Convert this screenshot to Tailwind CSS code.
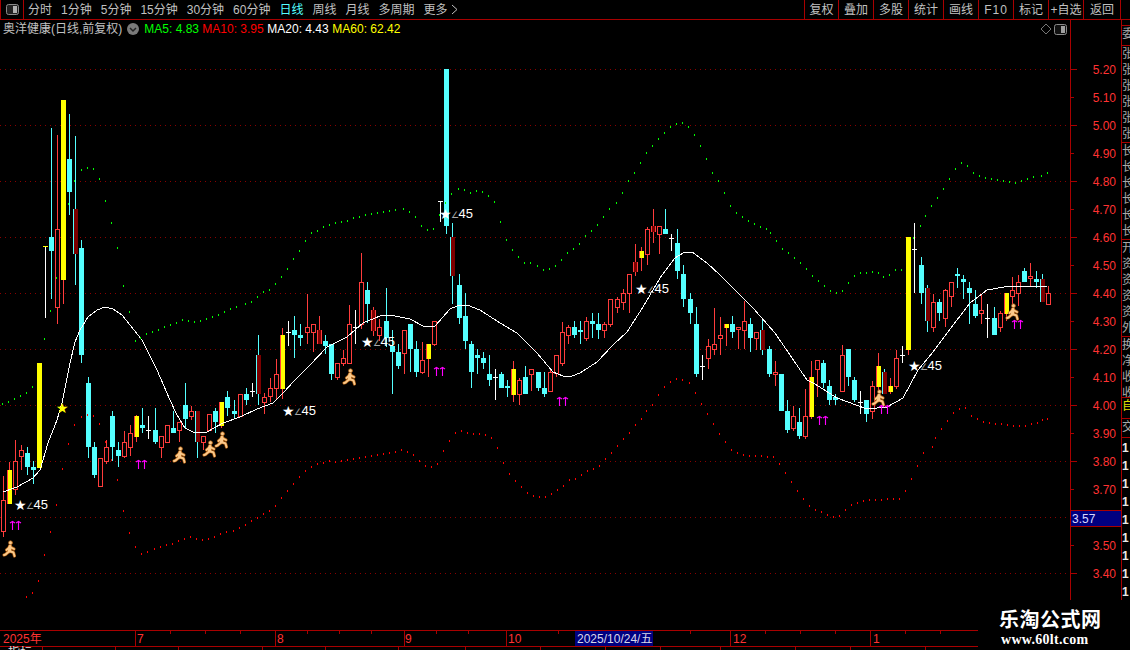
<!DOCTYPE html>
<html lang="zh-CN">
<head>
  <meta charset="UTF-8" />
  <title>奥洋健康 日线</title>
  <script src="https://cdn.jsdelivr.net/npm/@tailwindcss/browser@4"></script>
</head>
<body class="bg-black">
<div class="relative w-[1130px] h-[650px] overflow-hidden bg-black text-[12px] leading-none text-[#c0c0c0] font-['Liberation_Sans','Noto_Sans_CJK_SC',sans-serif]">

  <!-- toolbar -->
  <div class="flex items-center h-[20px] border-b border-[#a80000]">
    <div class="flex items-center justify-center w-[24px] h-full border-x border-[#a80000]">
      <svg width="13" height="11" viewBox="0 0 13 11"><rect x="0.5" y="0.5" width="12" height="10" rx="2" fill="#222" stroke="#8a8a8a"/><rect x="7" y="2" width="4" height="7" fill="#b0b0b0"/></svg>
    </div>
    <div class="flex items-center gap-[9px] pl-[4px]">
      <span>分时</span><span>1分钟</span><span>5分钟</span><span>15分钟</span><span>30分钟</span><span>60分钟</span>
      <span class="text-[#54ffff]">日线</span><span>周线</span><span>月线</span><span>多周期</span>
      <span class="flex items-center gap-[3px]">更多
        <svg width="7" height="11" viewBox="0 0 7 11" fill="none" stroke="#c0c0c0"><path d="M1 1l5 4.5-5 4.5"/></svg>
      </span>
    </div>
    <div class="flex ml-auto h-full mr-[9px] border-r border-[#a80000]">
      <span class="flex items-center justify-center w-[34px] border-l border-[#a80000]">复权</span>
      <span class="flex items-center justify-center w-[35px] border-l border-[#a80000]">叠加</span>
      <span class="flex items-center justify-center w-[35px] border-l border-[#a80000]">多股</span>
      <span class="flex items-center justify-center w-[35px] border-l border-[#a80000]">统计</span>
      <span class="flex items-center justify-center w-[35px] border-l border-[#a80000]">画线</span>
      <span class="flex items-center justify-center w-[35px] border-l border-[#a80000] tracking-[1px]">F10</span>
      <span class="flex items-center justify-center w-[35px] border-l border-[#a80000]">标记</span>
      <span class="flex items-center justify-center w-[35px] border-l border-[#a80000]">+自选</span>
      <span class="flex items-center justify-center w-[37px] border-l border-[#a80000]">返回</span>
    </div>
  </div>

  <!-- chart + price axis + side panel -->
  <div class="flex h-[580px]">
    <div class="flex flex-col w-[1070px]">
      <div class="flex items-center h-[18px] pl-[3px] pr-[3px]">
        <span>奥洋健康(日线,前复权)</span>
        <svg class="ml-[5px]" width="12" height="12" viewBox="0 0 12 12"><circle cx="6" cy="6" r="6" fill="#7a7a7a"/><path d="M3 5l3 3 3-3" fill="none" stroke="#222" stroke-width="1.5"/></svg>
        <span class="ml-[5px] w-[58px] text-[#00ff00]">MA5: 4.83</span>
        <span class="w-[65px] text-[#ff0000]">MA10: 3.95</span>
        <span class="w-[65px] text-white">MA20: 4.43</span>
        <span class="text-[#ffff00]">MA60: 62.42</span>
        <svg class="ml-auto" width="12" height="12" viewBox="0 0 12 12"><path d="M6 1l5 5-5 5-5-5z" fill="none" stroke="#777"/></svg>
        <svg class="ml-[2px]" width="13" height="11" viewBox="0 0 13 11"><rect x="0.5" y="0.5" width="12" height="10" rx="2" fill="#111" stroke="#8a8a8a"/><rect x="7" y="2" width="4" height="7" fill="#a0a0a0"/></svg>
      </div>
      <svg id="chart" class="block" width="1070" height="562" viewBox="0 38 1070 562" shape-rendering="crispEdges"></svg>
    </div>

    <div class="relative w-[51px] border-l border-[#a80000]">
      <svg id="axis" class="block" width="50" height="580" viewBox="1071 20 50 580"></svg>
      <div class="absolute left-0 top-[490px] flex items-center w-[50px] h-[17px] pl-[1px] bg-[#000080] border-y border-[#a80000] text-[#d8d8ff]">3.57</div>
    </div>

    <div class="flex flex-col flex-1 pt-[5px] overflow-hidden border-l border-[#a80000] leading-[16px] text-[#a8a8a8]">
      <div class="h-[20px] overflow-hidden border-t border-[#a80000]">委</div>
      <div class="h-[97px] overflow-hidden border-t border-[#a80000]">张<br>张<br>张<br>张<br>张<br>张</div>
      <div class="h-[97px] overflow-hidden border-t border-[#a80000]">长<br>长<br>长<br>长<br>长<br>长</div>
      <div class="h-[97px] overflow-hidden border-t border-[#a80000]">开<br>资<br>资<br>资<br>资<br>外</div>
      <div class="h-[61px] overflow-hidden border-t border-[#a80000]">换<br>净<br>收<br>收</div>
      <div class="h-[21px] overflow-hidden border-t border-[#a80000] text-[#e0e000]">自</div>
      <div class="h-[19px] overflow-hidden border-t border-[#a80000]">交</div>
      <div class="flex-1 pt-[1px] overflow-hidden border-t border-[#a80000] font-bold leading-[18px] text-[#e8e8e8]">1<br>1<br>1<br>1<br>1<br>1<br>1<br>1<br>1</div>
    </div>
  </div>

  <!-- time axis -->
  <svg id="time" class="block mt-[30px]" width="1130" height="20" viewBox="0 630 1130 20" shape-rendering="crispEdges"></svg>

  <!-- watermark -->
  <div class="absolute right-0 bottom-0 flex flex-col w-[152px] h-[47px] pt-[5px] pl-[21px] bg-black text-white font-bold">
    <div class="h-[24px] text-[20px] leading-[22px] tracking-[0.5px] font-['Noto_Sans_CJK_SC',sans-serif]">乐淘公式网</div>
    <div class="ml-[2px] h-[15px] text-[14px] leading-[15px] tracking-[0.3px] font-['Liberation_Serif',serif]">www.60lt.com</div>
  </div>
</div>

<script>
  const RED = '#ff3c3c', CYAN = '#54ffff', YEL = '#ffff00', DARK = '#7c0000';

  // x, type, wick top, body top, body bottom, wick bottom (px in the page)
  const candles = [
    [3,'r',476,500,532,537],[9,'y',462,470,504,504],[15,'r',440,461,490,495],[21,'r',445,450,457,470],
    [27,'c',447,453,467,475],[33,'c',461,467,470,484],[39,'Y',363,363,468,468],[45,'w',246,246,318,246],
    [51,'c',128,237,251,299],[57,'r',135,229,308,324],[63,'Y',100,100,280,304],[69,'c',114,159,192,215],
    [75,'d',136,209,254,285],[81,'c',240,248,355,363],[88,'c',377,383,447,458],[94,'c',442,447,475,478],
    [100,'r',458,458,487,487],[106,'r',440,447,462,464],[112,'c',411,416,447,461],[118,'c',442,450,456,467],
    [124,'r',431,442,457,458],[130,'r',425,433,448,456],[136,'y',415,416,437,442],[142,'c',408,425,428,433],
    [148,'w',416,430,439,430],[155,'c',408,430,442,444],[161,'r',436,436,448,458],[167,'r',425,425,443,443],
    [173,'c',411,428,433,433],[179,'r',422,422,431,442],[185,'c',383,405,419,428],[191,'r',406,411,417,420],
    [197,'d',411,411,442,458],[203,'r',436,436,443,450],[209,'r',414,414,431,431],[215,'c',408,411,422,433],
    [221,'y',402,402,426,428],[227,'c',391,397,408,416],[234,'c',400,411,414,419],[240,'r',394,394,417,417],
    [246,'c',388,394,400,405],[252,'w',383,391,397,391],[258,'d',335,355,394,405],[264,'r',393,397,403,414],
    [270,'r',378,388,397,402],[276,'r',359,374,389,400],[282,'y',328,335,389,399],[288,'w',321,332,346,332],
    [294,'c',316,330,335,358],[300,'c',324,335,338,346],[307,'r',294,327,333,344],[313,'r',324,324,333,352],
    [319,'e',316,330,344,344],[325,'c',335,341,346,354],[331,'c',344,344,374,380],[337,'r',363,363,378,380],
    [343,'r',350,358,364,366],[349,'r',305,324,364,364],[355,'w',310,327,344,327],[361,'r',253,282,325,329],
    [367,'c',282,290,304,323],[373,'e',307,310,331,336],[379,'r',319,327,336,341],[386,'c',288,321,338,347],
    [392,'c',330,346,352,394],[398,'c',344,352,366,369],[404,'r',330,330,354,374],[410,'c',324,324,349,372],
    [416,'c',341,349,372,377],[422,'r',342,360,373,374],[428,'y',344,344,359,377],[434,'r',321,321,345,346],
    [440,'w',201,201,222,201],[446,'c',69,69,226,234],[452,'d',223,237,276,304],[459,'c',274,285,318,324],
    [465,'c',293,316,341,349],[471,'c',341,344,372,388],[477,'c',349,355,358,374],[483,'c',352,358,363,369],
    [489,'c',355,374,380,386],[495,'w',369,377,400,377],[501,'c',372,374,388,388],[507,'c',380,386,388,397],
    [513,'y',361,369,395,402],[519,'r',378,380,395,405],[525,'c',366,377,394,394],[531,'r',369,369,375,391],
    [538,'c',372,372,388,391],[544,'c',372,388,394,397],[550,'r',370,372,392,392],[556,'r',355,355,374,377],
    [562,'r',322,332,364,366],[568,'r',325,327,336,344],[574,'c',321,327,335,338],[580,'c',321,330,332,344],
    [586,'r',317,321,339,341],[592,'c',313,321,324,338],[598,'c',313,324,330,339],[604,'r',322,324,331,338],
    [610,'r',299,299,325,327],[617,'r',297,299,308,313],[623,'r',289,293,303,310],[629,'r',274,274,294,313],
    [635,'e',244,262,272,276],[641,'y',247,251,258,271],[647,'r',227,229,255,265],[653,'e',209,226,232,243],
    [659,'r',226,226,235,254],[665,'c',209,229,234,234],[671,'w',234,238,251,238],[677,'c',229,243,271,279],
    [683,'c',265,274,299,307],[690,'c',293,299,313,324],[696,'c',307,324,374,377],[702,'w',355,366,380,366],
    [708,'r',339,346,359,369],[714,'r',308,344,350,355],[720,'r',317,335,339,355],[726,'y',324,324,328,346],
    [732,'c',316,324,332,338],[738,'r',327,327,330,349],[744,'r',301,321,331,349],[750,'c',318,324,338,352],
    [756,'r',332,332,339,350],[762,'d',318,330,350,355],[769,'c',346,349,374,377],[775,'r',361,372,375,386],
    [781,'c',374,374,411,411],[787,'c',400,411,430,433],[793,'r',406,416,429,431],[799,'c',408,422,436,439],
    [805,'r',389,416,437,439],[811,'y',361,377,417,419],[817,'r',360,360,370,397],[823,'c',360,363,383,388],
    [829,'c',380,386,400,405],[835,'c',394,397,400,405],[842,'r',345,355,392,392],[848,'c',349,349,377,386],
    [854,'c',377,380,400,402],[860,'w',391,402,414,402],[866,'c',400,400,414,422],[872,'r',381,386,412,419],
    [878,'y',353,366,387,392],[884,'d',369,372,394,394],[890,'y',378,386,392,394],[896,'r',350,358,387,389],
    [902,'w',346,355,363,355],[908,'Y',237,237,350,355],[914,'w',223,249,293,249],[921,'c',257,265,293,304],
    [927,'d',285,288,321,332],[933,'r',294,302,328,332],[939,'c',299,302,313,321],[945,'r',289,290,319,327],
    [951,'r',282,282,297,307],[957,'c',268,274,276,288],[963,'c',275,279,282,299],[969,'c',282,288,293,324],
    [975,'c',290,304,316,318],[981,'r',294,310,314,324],[987,'w',304,318,338,318],[994,'c',307,318,335,335],
    [1000,'r',311,313,328,332],[1006,'y',293,293,314,321],[1012,'r',277,290,297,306],[1018,'r',275,282,294,306],
    [1024,'c',268,271,282,282],[1030,'r',263,276,279,286],[1036,'c',271,279,282,288],[1042,'d',274,279,302,302],
    [1048,'r',286,293,305,305]
  ];

  const ma = [[3,492],[17,487],[33,478],[40,470],[48,443],[57,420],[62,403],[70,363],[75,342],[80,330],[88,317],[97,310],[105,307],[113,309],[122,315],[130,325],[142,340],[157,370],[170,400],[177,415],[185,428],[195,433],[207,432],[223,423],[240,417],[257,409],[273,403],[283,393],[295,380],[310,365],[327,347],[347,337],[363,323],[380,316],[390,315],[410,319],[423,326],[435,326],[450,309],[457,306],[467,305],[480,310],[500,323],[517,333],[537,353],[553,372],[563,376],[572,376],[580,373],[597,362],[613,345],[627,332],[643,307],[660,278],[675,258],[683,253],[692,252],[707,263],[720,275],[735,290],[753,308],[775,333],[790,355],[807,380],[815,384],[837,398],[867,409],[887,407],[903,398],[918,370],[933,352],[957,320],[970,303],[987,290],[1010,286],[1047,286]];

  const green = [[2,403],[8,401],[14,398],[20,395],[26,392],[32,386],[44,338],[50,310],[56,277],[68,203],[74,180],[81,169],[87,167],[93,168],[99,178],[105,200],[111,222],[117,247],[123,285],[129,311],[135,340],[140,337],[146,333],[152,331],[158,329],[164,326],[170,324],[176,322],[182,319],[188,320],[194,321],[200,320],[206,318],[212,316],[218,314],[224,311],[230,308],[236,306],[245,303],[251,301],[257,296],[263,291],[269,289],[275,283],[281,276],[287,268],[293,258],[299,250],[305,240],[311,232],[317,230],[323,226],[329,224],[335,222],[341,221],[347,220],[353,217],[359,216],[365,214],[371,213],[377,212],[383,211],[389,210],[395,209],[403,208],[409,211],[415,216],[421,225],[427,229],[433,228],[439,214],[445,202],[451,193],[458,188],[464,189],[470,192],[476,190],[482,191],[488,195],[494,201],[500,221],[506,239],[512,249],[518,256],[524,262],[530,262],[537,265],[543,269],[549,268],[555,265],[561,259],[567,252],[573,248],[579,243],[585,235],[591,230],[597,224],[603,216],[609,208],[616,202],[622,192],[628,180],[634,172],[640,162],[646,152],[652,145],[658,138],[664,132],[670,126],[676,123],[682,122],[688,126],[694,134],[700,145],[706,158],[712,172],[718,180],[724,192],[730,205],[736,212],[742,216],[748,220],[754,223],[760,226],[766,228],[770,232],[776,240],[782,248],[788,252],[794,257],[800,262],[806,268],[812,275],[818,280],[824,285],[830,290],[836,292],[842,290],[848,282],[854,275],[860,272],[866,272],[872,271],[878,272],[883,276],[889,274],[895,269],[901,269],[913,237],[920,225],[925,215],[931,205],[937,197],[943,188],[949,178],[955,168],[961,162],[967,165],[973,172],[979,175],[985,177],[991,178],[997,179],[1003,180],[1009,181],[1015,182],[1021,180],[1027,178],[1033,176],[1041,175],[1047,172]];

  const lower = [[2,609],[8,607],[14,604],[20,600],[26,596],[32,592],[38,580],[44,554],[50,531],[56,504],[62,468],[68,443],[74,424],[81,416],[87,414],[93,415],[99,423],[105,441],[111,459],[117,479],[123,510],[129,532],[135,546],[141,553],[147,551],[154,548],[160,546],[166,544],[172,543],[178,540],[184,538],[190,536],[196,538],[202,539],[208,538],[214,536],[220,533],[226,531],[233,530],[239,527],[245,524],[251,520],[257,517],[263,513],[269,510],[275,505],[281,497],[287,490],[293,483],[299,476],[305,470],[311,466],[317,463],[323,462],[329,460],[335,461],[341,460],[347,459],[353,458],[359,457],[365,456],[371,455],[377,454],[383,453],[389,452],[395,451],[401,449],[407,451],[413,454],[419,460],[425,465],[431,466],[437,463],[443,450],[449,440],[455,432],[461,430],[467,432],[473,433],[479,433],[485,434],[491,437],[497,447],[503,462],[509,473],[515,480],[521,486],[527,492],[533,495],[539,496],[545,496],[551,493],[557,489],[563,485],[569,479],[575,478],[581,474],[587,470],[593,468],[599,465],[605,458],[611,452],[617,445],[623,438],[629,432],[635,424],[641,418],[646,410],[652,404],[658,394],[664,386],[670,381],[676,378],[682,379],[689,382],[695,392],[701,403],[707,413],[713,423],[719,433],[725,441],[731,449],[737,452],[743,454],[749,455],[755,455],[761,455],[767,456],[773,456],[779,463],[785,472],[791,481],[797,490],[803,498],[809,505],[815,509],[821,511],[827,514],[833,516],[839,515],[845,509],[851,504],[857,502],[863,500],[869,499],[875,499],[881,499],[887,498],[893,498],[899,498],[905,490],[911,478],[917,465],[923,452],[932,446],[935,437],[941,428],[947,420],[953,412],[959,408],[965,407],[971,415],[977,418],[983,421],[989,422],[995,423],[1001,423],[1007,424],[1013,425],[1019,425],[1025,425],[1031,423],[1037,422],[1042,419],[1047,418]];

  const rect = (x, y, w, h, f) => `<rect x="${x}" y="${y}" width="${w}" height="${h}" fill="${f}"/>`;

  function candle([x, t, wt, bt, bb, wb]) {
    const h = Math.max(bb - bt, 1), l = x - 2;
    if (t === 'w') return rect(x, wt, 1, bb - wt, '#fff') + rect(l, bt, 5, 1, bt === wt && wt < 250 && x < 50 ? YEL : '#fff');
    if (t === 'c') return rect(x, wt, 1, wb - wt, CYAN) + rect(l, bt, 5, h, CYAN);
    if (t === 'r') return rect(x, wt, 1, wb - wt, RED) + rect(l, bt, 5, h, RED) + rect(l + 1, bt + 1, 3, Math.max(h - 2, 0), '#000');
    if (t === 'Y') return rect(x, wt, 1, wb - wt, RED) + rect(l, bt, 5, h, YEL);
    if (t === 'y') return rect(x, wt, 1, wb - wt, RED) + rect(l, bt, 5, h, RED) + rect(l + 1, bt, 4, h, YEL);
    if (t === 'd') return rect(x, wt, 1, wb - wt, CYAN) + rect(l, bt, 1, h, CYAN) + rect(l + 1, bt, 4, h, DARK);
    return rect(x, wt, 1, wb - wt, RED) + rect(l, bt, 5, h, RED) + rect(l + 1, bt, 3, h, DARK);
  }

  // 奔跑的小人 signal
  const limbs = 'M7 5.5L6.5 10 2.5 13.5 1 14M6.5 10L10.5 11.5 11.5 15M7 6L3.5 9M7 6L11 8';
  const runner = (cx, cy) => `<g shape-rendering="auto" transform="translate(${cx - 7} ${cy - 8})" fill="none" stroke-linecap="round" stroke-linejoin="round">
    <path d="${limbs}" stroke="#a85a10" stroke-width="3.2"/>
    <path d="M7 5.5L6.5 10" stroke="#a85a10" stroke-width="4.4"/>
    <circle cx="7.5" cy="1.8" r="2" fill="#fbc98a" stroke="#a85a10" stroke-width=".7"/>
    <path d="${limbs}" stroke="#fbc98a" stroke-width="1.9"/>
    <path d="M7 5.5L6.5 10" stroke="#fbc98a" stroke-width="3"/></g>`;

  // ↑↑ pair
  const arrows = (x1, top) => [x1, x1 + 6].map(x => `<path shape-rendering="auto" d="M${x + .5} ${top}V${top + 9}M${x - 2} ${top + 2}L${x + .5} ${top + .5}L${x + 3} ${top + 2}" fill="none" stroke="#ff00ff" stroke-width="1.1"/>`).join('');

  // ★∠45 signal, cx/cy = star centre
  const starLabel = (cx, cy) => `<text y="${cy + 4}" font-size="13" fill="#fff"><tspan x="${cx - 6}" y="${cy + 5}" font-family="DejaVu Sans" font-size="14">★</tspan><tspan x="${cx + 6}" y="${cy + 4}" font-family="DejaVu Sans" font-size="9" fill="#a8a8a8">∠</tspan><tspan x="${cx + 13.5}" y="${cy + 4}">45</tspan></text>`;

  let s = '';
  for (let y = 69; y < 600; y += 56) {
    s += `<line x1="0" x2="1068" y1="${y + .5}" y2="${y + .5}" stroke="#8a0000" stroke-dasharray="1 4"/>`;
  }
  s += candles.map(candle).join('');
  s += `<polyline points="${ma.map(p => p.join(',')).join(' ')}" fill="none" stroke="#fff"/>`;
  s += green.map(([x, y]) => rect(x, y, 1, 2, '#00ff00')).join('');
  s += lower.map(([x, y]) => rect(x, y, 1, 2, '#ff0000')).join('');
  s += [[10,549],[180,455],[210,449],[222,440],[350,377],[879,398],[1013,312]].map(p => runner(...p)).join('');
  s += [[12,521],[138,460],[436,367],[559,397],[819,416],[881,405],[1014,320]].map(p => arrows(...p)).join('');
  s += [[20,505],[288,411],[367,342],[445,214],[641,289],[914,366]].map(p => starLabel(...p)).join('');
  s += `<text shape-rendering="auto" x="56" y="413" font-family="DejaVu Sans" font-size="14" fill="${YEL}">★</text>`;
  document.getElementById('chart').innerHTML = s;

  // price axis
  let a = '';
  for (let i = 0; i < 19; i++) {
    const y = 69 + i * 28, major = i % 2 === 0;
    a += `<rect x="1071" y="${y}" width="${major ? 6 : 3}" height="1" fill="#a80000"/>`;
    // 3.60 sits under the current-price box
    if (i !== 16) a += `<text x="1116" y="${y + 5}" text-anchor="end" font-size="12" fill="#ff3232">${(5.2 - i * 0.1).toFixed(2)}</text>`;
  }
  document.getElementById('axis').innerHTML = a;

  // time axis
  let t = rect(0, 630, 978, 1, '#a80000') + rect(0, 646, 978, 1, '#a80000');
  [135, 275, 404, 506, 730, 870].forEach(x => t += rect(x, 630, 1, 16, '#a80000'));
  [170, 205, 240, 307, 339, 371, 436, 468, 558, 690, 765, 800, 835, 905, 940].forEach(x => t += rect(x, 631, 1, 3, '#a80000'));
  [42, 115, 178, 262, 325, 398, 465, 540, 605, 660, 720, 795, 850, 925].forEach(x => t += rect(x, 647, 1, 3, '#a80000'));
  [['2025年', 3], ['7', 137], ['8', 277], ['9', 405], ['10', 508], ['12', 733], ['1', 873]].forEach(([l, x]) => {
    t += `<text shape-rendering="auto" x="${x}" y="643" font-size="12" fill="#ff3232">${l}</text>`;
  });
  t += rect(575, 631, 78, 15, '#000080') + `<text shape-rendering="auto" x="577" y="643" font-size="12" fill="#d8d8e8">2025/10/24/五</text>`;
  t += `<text shape-rendering="auto" x="8" y="657" font-size="12" fill="#e0e0e0">指标</text>`;
  document.getElementById('time').innerHTML = t;
</script>
</body>
</html>
